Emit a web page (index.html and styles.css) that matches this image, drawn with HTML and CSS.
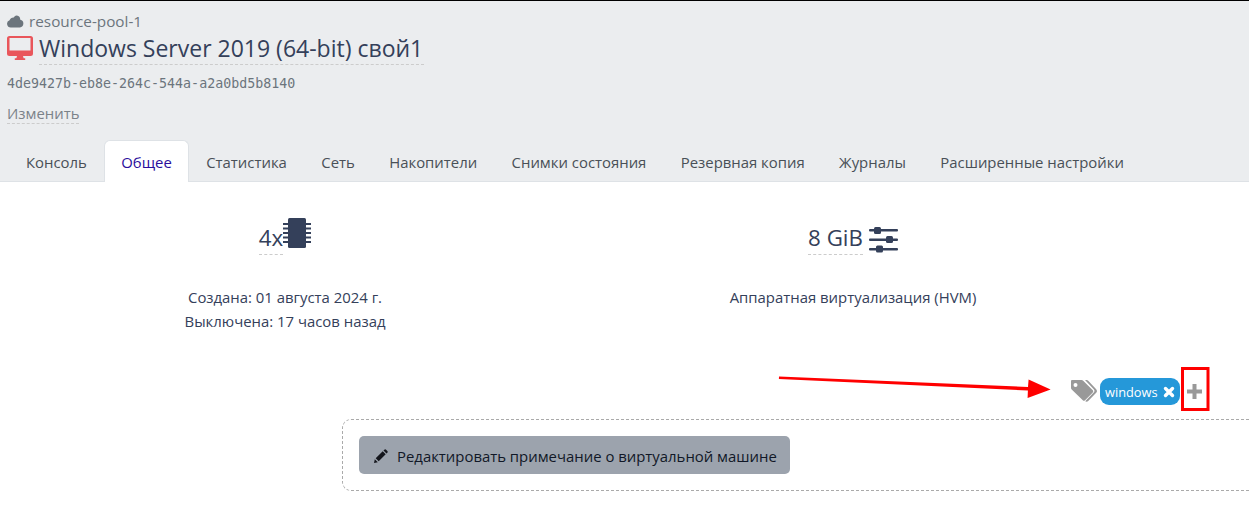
FILE: index.html
```html
<!DOCTYPE html>
<html lang="ru">
<head>
<meta charset="utf-8">
<title>Windows Server 2019 (64-bit) свой1</title>
<link rel="stylesheet" href="styles.css">
</head>
<body>
<header class="header">
  <div class="pool">
    <svg class="pool-icon" viewBox="0 0 24 18"><path fill="#6c757d" d="M5.500 17.500A5.200 5.200 0 0 1 3.600 7.400 6 6 0 0 1 9.500 3.200 7 7 0 0 1 12.800.7a6.200 6.200 0 0 1 6 5.800 5.600 5.600 0 0 1-.6 11z"/></svg>
    <span class="pool-name">resource-pool-1</span>
  </div>
  <h1 class="title">
    <svg class="vm-icon" viewBox="0 0 26 24"><path fill="#e9565b" d="M2.500 0h21A2.500 2.500 0 0 1 26 2.500v15a2.500 2.500 0 0 1-2.500 2.500H16l.6 2.200h1.600V24H7.800v-1.800h1.600L10 20H2.500A2.500 2.500 0 0 1 0 17.500v-15A2.500 2.500 0 0 1 2.500 0zM2.500 2v12.500h21V2z"/></svg>
    <span class="title-text">Windows Server 2019 (64-bit) свой1</span>
  </h1>
  <div class="uuid">4de9427b-eb8e-264c-544a-a2a0bd5b8140</div>
  <div class="edit-row"><span class="edit">Изменить</span></div>
  <nav class="tabs">
    <a class="tab">Консоль</a>
    <a class="tab active">Общее</a>
    <a class="tab">Статистика</a>
    <a class="tab">Сеть</a>
    <a class="tab">Накопители</a>
    <a class="tab">Снимки состояния</a>
    <a class="tab">Резервная копия</a>
    <a class="tab">Журналы</a>
    <a class="tab">Расширенные настройки</a>
  </nav>
</header>
<main class="content">
  <section class="stats">
    <div class="stat">
      <div class="stat-main">
        <span class="dotted">4x</span>
        <svg class="chip" viewBox="0 0 28 30"><path fill="#34405a" d="M5 1.500Q5 0 6.500 0h15Q23 0 23 1.500v27q0 1.500-1.500 1.500h-15Q5 30 5 28.500z"/><path stroke="#34405a" stroke-width="2" d="M0 6h5M0 10.500h5M0 15h5M0 19.500h5M0 24h5M23 6h5M23 10.500h5M23 15h5M23 19.500h5M23 24h5"/></svg>
      </div>
      <p class="stat-text">Создана: 01 августа 2024 г.<br>Выключена: 17 часов назад</p>
    </div>
    <div class="stat">
      <div class="stat-main">
        <span class="dotted">8 GiB</span>
        <svg class="sliders" viewBox="0 0 29 26"><g fill="#34405a"><rect x="0" y="2" width="29" height="2.400" rx="1"/><rect x="0" y="11.500" width="29" height="2.400" rx="1"/><rect x="0" y="21" width="29" height="2.400" rx="1"/><rect x="5" y="0" width="7" height="7" rx="1.500"/><rect x="17" y="9" width="7" height="7" rx="1.500"/><rect x="7" y="18.500" width="7" height="7" rx="1.500"/></g></svg>
      </div>
      <p class="stat-text">Аппаратная виртуализация (HVM)</p>
    </div>
  </section>
  <div class="tags">
    <svg class="tag-icon" viewBox="0 0 26 22"><path fill="#999" d="M1 0h9.500q1 0 1.700.7l9.600 9.600q1 1.100 0 2.200l-7.800 7.800q-1.100 1-2.200 0L.7 9.500Q0 8.800 0 8V1q0-1 1-1zm3.500 3a2 2 0 1 0 0 4 2 2 0 0 0 0-4z"/><path fill="#999" d="M14 0h1.500q1 0 1.700.7l8 8.600q1.500 2 0 3.500l-8 8.300q-1.300 1.200-3 .2l8.500-8.800q1.500-1.500 0-3.200z"/></svg>
    <span class="tag">windows<svg class="tag-x" viewBox="0 0 12 12"><path stroke="#fff" stroke-width="3.400" stroke-linecap="round" d="M2.500 2.500l7 7M9.500 2.500l-7 7"/></svg></span>
    <svg class="plus" viewBox="0 0 15 15"><path fill="#999" d="M5.500 0h4v5.500H15v4H9.500V15h-4V9.500H0v-4h5.500z"/></svg>
  </div>
  <div class="note">
    <button class="note-btn" type="button">
      <svg class="pencil" viewBox="0 0 14 14"><path fill="#14161c" d="M0 14l.8-3.800 3 3zM1.700 9.300L8.700 2.300l3 3-7 7zM9.500 1.500l.8-.8q.9-.9 1.800 0l1.200 1.200q.9.900 0 1.800l-.8.8z"/></svg>
      Редактировать примечание о виртуальной машине
    </button>
  </div>
</main>
<svg class="annotation" viewBox="0 0 1249 519" aria-hidden="true">
  <path fill="#f00" d="M779 376.500l249 10.500.6-7.500 22 10-23 8.500.3-7.500-249-11.500z"/>
  <rect x="1182.500" y="368.500" width="25.500" height="41" fill="none" stroke="#f00" stroke-width="3"/>
</svg>
</body>
</html>
```
FILE: styles.css
```css
* { box-sizing: border-box; }
html, body { height: 100%; }
body {
  margin: 0;
  overflow: hidden;
  position: relative;
  background: #fff;
  color: #34405a;
  font-family: "Open Sans", "Noto Sans", sans-serif;
  font-size: 14px;
}
.header {
  display: flex;
  flex-direction: column;
  height: 182px;
  background: #ebedef;
  border-top: 1px solid #000;
  border-bottom: 1px solid #dee2e6;
  padding: 11px 0 0 7px;
}
.pool {
  display: flex;
  align-items: center;
  gap: 5px;
  height: 19px;
  font-size: 15.300px;
  color: #6c757d;
}
.pool-icon { width: 17px; height: 13px; }
.pool-name { padding-bottom: 2px; }
.title {
  display: flex;
  align-items: flex-start;
  gap: 6px;
  margin: 1px 0 0;
  height: 33px;
  font-weight: 400;
  font-size: 23px;
  line-height: 33px;
  color: #34405a;
}
.vm-icon { width: 26px; height: 24px; margin-top: 4px; flex: none; }
.title-text { border-bottom: 1px dashed #ccc; height: 33px; padding-right: 1px; }
.uuid {
  margin-top: 10px;
  height: 18px;
  font-family: "DejaVu Sans Mono", "Liberation Mono", monospace;
  font-size: 13.300px;
  line-height: 18px;
  color: #6c757d;
}
.edit-row { margin-top: 11px; height: 21px; }
.edit {
  display: inline-block;
  font-size: 14.900px;
  line-height: 19px;
  height: 20px;
  color: #7b8289;
  border-bottom: 1px dashed #ccc;
}
.tabs {
  display: flex;
  flex: none;
  height: 42px;
  margin: auto 0 -1px 2px;
}
.tab {
  padding: 0 16.400px 0 16px;
  line-height: 42px;
  height: 42px;
  font-size: 14.900px;
  color: #495057;
  white-space: nowrap;
  border: 1px solid transparent;
  border-bottom: 0;
  border-radius: 6px 6px 0 0;
}
.tab.active {
  background: #fff;
  color: #2a0e9c;
  border-color: #dee2e6;
}
.stats {
  display: grid;
  grid-template-columns: 570px 566px;
  padding-top: 33px;
}
.stat { text-align: center; }
.stat-main {
  display: flex;
  justify-content: center;
  align-items: center;
  height: 38px;
  font-size: 22.300px;
  line-height: 32px;
}
.dotted { border-bottom: 1px dashed #ccc; height: 33px; margin-top: 8px; }
.chip { width: 28px; height: 30px; margin-top: -2px; }
.sliders { width: 29px; height: 26px; margin-left: 6px; margin-top: 12px; }
.stat-text {
  margin: 32px 0 0;
  font-size: 14.900px;
  line-height: 24px;
  color: #34405a;
  min-height: 48px;
}
.tags {
  display: flex;
  justify-content: flex-end;
  align-items: center;
  height: 30px;
  margin-top: 43px;
  padding-right: 47px;
}
.tag-icon { width: 26px; height: 22px; margin-right: 3px; }
.tag {
  display: flex;
  align-items: center;
  height: 27px;
  padding: 1px 0 0 5px;
  width: 80px;
  border-radius: 9px;
  background: #2598d9;
  color: #fff;
  font-size: 12.800px;
}
.tag-x { width: 12px; height: 12px; margin-left: 5px; }
.plus { width: 15px; height: 15px; margin-left: 7px; }
.note {
  height: 72px;
  margin: 13px 0 0 342px;
  padding: 16px;
  border: 1px dashed #aaa;
  border-right: 0;
  border-radius: 9px 0 0 9px;
}
.note-btn {
  display: flex;
  align-items: center;
  gap: 9px;
  height: 38px;
  padding: 2px 0 0 15px;
  width: 431px;
  border: 0;
  border-radius: 5px;
  background: #9ca3ad;
  color: #111827;
  font-family: inherit;
  font-size: 14.900px;
  font-weight: 400;
  white-space: nowrap;
}
.pencil { width: 14px; height: 14px; flex: none; }
.annotation {
  position: absolute;
  left: 0;
  top: 0;
  width: 1249px;
  height: 519px;
  pointer-events: none;
}
```
